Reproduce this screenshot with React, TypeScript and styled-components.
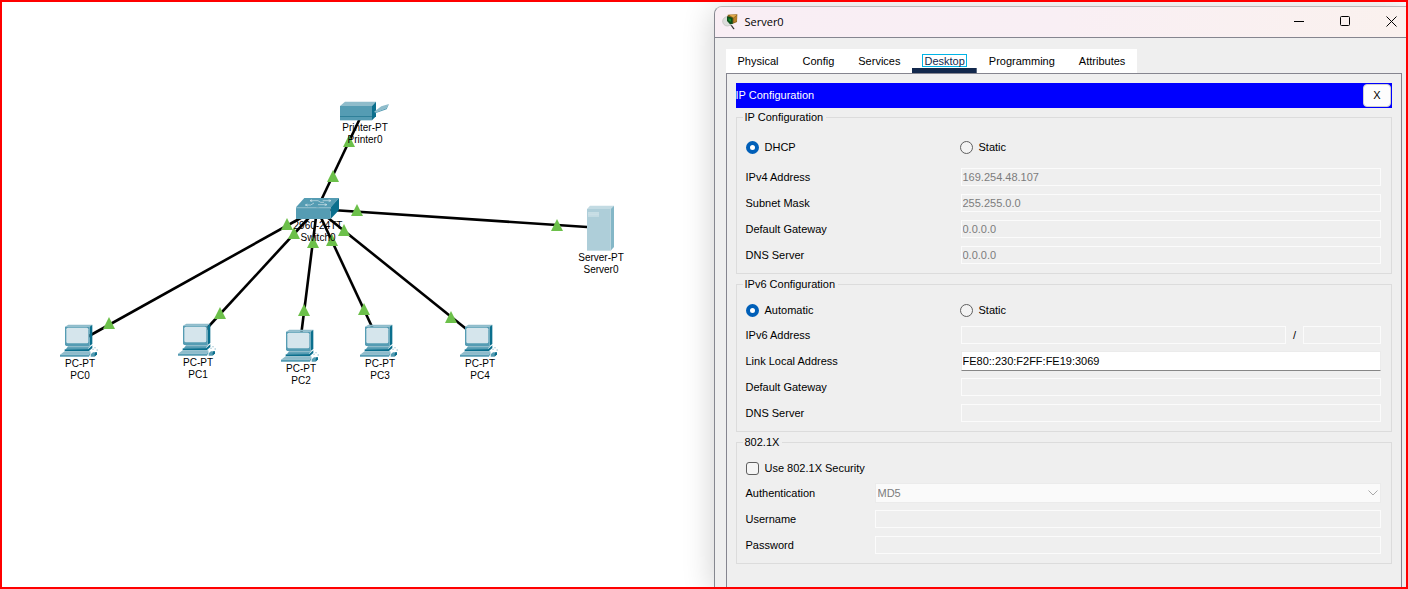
import React, { useState } from "react";
import styled, { createGlobalStyle } from "styled-components";

const GlobalStyle = createGlobalStyle`
  *, *::before, *::after { box-sizing: border-box; }
  body {
    margin: 0;
    background: #fff;
    color: #000;
    font: 11px/13px "Liberation Sans", Arial, sans-serif;
  }
  button, input, select { font: inherit; color: inherit; margin: 0; }
`;

const Frame = styled.main`
  display: flex;
  min-height: 100vh;
  border: 2px solid #f00;
  overflow: hidden;
`;

/* ---------- topology canvas ---------- */

const Canvas = styled.section`
  position: relative;
  flex: 712 1 0;
  min-width: 0;
`;

const Links = styled.svg`
  position: absolute;
  inset: 0;
  width: 100%;
  height: 100%;
  overflow: visible;
`;

const Node = styled.div<{ $x: number; $y: number }>`
  position: absolute;
  left: ${(p) => p.$x}px;
  top: ${(p) => p.$y}px;
  width: 80px;
  margin-left: -40px;
  display: flex;
  flex-direction: column;
  align-items: center;
  gap: 1px;
`;

const NodeLabel = styled.div`
  font-size: 10px;
  line-height: 12px;
  text-align: center;
  white-space: nowrap;
`;

const FRONT = "#559cb3";
const TOP = "#8fbccb";
const SIDE = "#0b6f8d";

const PcIcon = () => (
  <svg width="40" height="33" viewBox="0 0 120 99" aria-hidden="true">
    <path d="M15 8L25 2H97L89 8Z" fill={TOP} />
    <path d="M89 8L97 2V60L89 66Z" fill={SIDE} />
    <path d="M15 8H89V66H18L15 62Z" fill={FRONT} />
    <rect x="19" y="11" width="66" height="47" rx="5" fill="#d5e5ec" />
    <path d="M24 66H92L86 72H20Z" fill={TOP} />
    <path d="M13 78L24 70H86L84 78Z" fill={FRONT} />
    <path d="M84 76L97 64V72L86 82H14V77Z" fill={SIDE} />
    <path d="M0 92L14 82H91L87 92Z" fill={TOP} />
    <path d="M0 92H87L91 82V90L87 98H0Z" fill={FRONT} />
    <path d="M92 91L99 85H110V92L103 98H92Z" fill={FRONT} />
    <path d="M106 85H111V91L104 98V91Z" fill={SIDE} />
    <path d="M97 74h4v3h-4zM103 70h4v3h-4zM110 76h3v4h-3z" fill={TOP} />
  </svg>
);

const PrinterIcon = () => (
  <svg width="50" height="20" viewBox="0 0 150 60" aria-hidden="true">
    <path d="M0 15L15 2H108L96 15Z" fill={TOP} />
    <path d="M96 15L108 2V46L96 58Z" fill={SIDE} />
    <path d="M0 15H96V58H0Z" fill={FRONT} />
    <path d="M0 45H96V48H0Z" fill="#2f8099" />
    <path d="M102 32L124 16L147 9L138 22L108 34Z" fill={TOP} />
    <path d="M102 32L108 34L138 22L147 9L140 25L106 37Z" fill={FRONT} />
  </svg>
);

const SwitchIcon = () => (
  <svg width="44" height="21" viewBox="0 0 132 63" aria-hidden="true">
    <path d="M0 28L25 0H129L104 28Z" fill={FRONT} />
    <path d="M104 28L129 0V36L104 63Z" fill={SIDE} />
    <path d="M0 28H104V63H0Z" fill={FRONT} />
    <path d="M0 28H104L106 31H0Z" fill={TOP} />
    <g fill="none" stroke="#d5e6ec" strokeWidth="2">
      <path d="M42 8H66L74 13H84M48 5L42 8L49 11" />
      <path d="M28 21H44L54 15M34 18L28 21L35 24" />
      <path d="M80 8H104M98 5L105 8L98 11" />
      <path d="M66 20H92M86 17L93 20L86 23" />
    </g>
  </svg>
);

const ServerIcon = () => (
  <svg width="28" height="46" viewBox="0 0 84 138" aria-hidden="true">
    <path d="M0 12L9 2H81L71 12Z" fill="#c3dbe3" />
    <path d="M71 12L81 2V126L71 137Z" fill="#84b7c7" />
    <path d="M0 12H71V137H0Z" fill="#aeced9" />
    <path d="M3 21H36V35H3Z" fill="#cde1e8" />
    <path d="M3 24H36M3 31H36" stroke="#bcd6df" strokeWidth="2" />
  </svg>
);

type Kind = "pc" | "printer" | "switch" | "server";

const icons: Record<Kind, React.FC> = {
  pc: PcIcon,
  printer: PrinterIcon,
  switch: SwitchIcon,
  server: ServerIcon,
};

const devices: { kind: Kind; model: string; name: string; x: number; y: number }[] = [
  { kind: "printer", model: "Printer-PT", name: "Printer0", x: 363, y: 99 },
  { kind: "switch", model: "2960-24TT", name: "Switch0", x: 316, y: 196 },
  { kind: "server", model: "Server-PT", name: "Server0", x: 599, y: 203 },
  { kind: "pc", model: "PC-PT", name: "PC0", x: 78, y: 322 },
  { kind: "pc", model: "PC-PT", name: "PC1", x: 196, y: 321 },
  { kind: "pc", model: "PC-PT", name: "PC2", x: 299, y: 327 },
  { kind: "pc", model: "PC-PT", name: "PC3", x: 378, y: 322 },
  { kind: "pc", model: "PC-PT", name: "PC4", x: 478, y: 322 },
];

const hub = [315, 207];
const linkEnds = [
  [361, 110], [600, 226], [78, 339], [196, 336], [298, 342], [378, 342], [478, 338],
];
const linkLights = [
  [347, 139], [331, 174], [355, 208], [555, 223], [285, 222], [292, 231], [311, 240],
  [330, 238], [342, 228], [107, 321], [218, 311], [302, 308], [362, 307], [449, 315],
];

const Topology = () => (
  <Canvas aria-label="Network topology">
    <Links aria-hidden="true">
      {linkEnds.map(([x, y]) => (
        <line key={x} x1={hub[0]} y1={hub[1]} x2={x} y2={y} stroke="#000" strokeWidth="2.6" />
      ))}
      {linkLights.map(([x, y]) => (
        <path key={`${x}-${y}`} d={`M${x} ${y - 6}L${x + 6} ${y + 6}H${x - 6}Z`} fill="#6cc04a" />
      ))}
    </Links>
    {devices.map((d) => {
      const Icon = icons[d.kind];
      return (
        <Node key={d.name} $x={d.x} $y={d.y}>
          <Icon />
          <NodeLabel>
            {d.model}
            <br />
            {d.name}
          </NodeLabel>
        </Node>
      );
    })}
  </Canvas>
);

/* ---------- device window ---------- */

const Window = styled.section`
  position: relative;
  flex: 692 1 0;
  min-width: 0;
  margin-top: 4px;
  display: flex;
  flex-direction: column;
  border-top: 1px solid #b9b9b9;
  border-left: 1px solid #85878f;
  border-top-left-radius: 8px;
  background: #efefef;
  box-shadow: 0 4px 32px rgba(0, 0, 0, 0.2);
`;

const TitleBar = styled.header`
  display: flex;
  align-items: center;
  height: 31px;
  padding: 0 0 1px 7px;
  gap: 6px;
  border-bottom: 1px solid #85858f;
  border-top-left-radius: 7px;
  background: linear-gradient(90deg, #f9eef4, #f9eff4 50%, #faf1ee);
`;

const Title = styled.h1`
  flex: 1;
  margin: 0;
  font: 400 11px/16px "Open Sans", sans-serif;
`;

const WindowControls = styled.div`
  display: flex;
  gap: 16px;
`;

const WindowButton = styled.button`
  display: grid;
  place-items: center;
  width: 30px;
  height: 28px;
  padding: 0;
  border: 0;
  background: none;
`;

const WindowBody = styled.div`
  flex: 1;
  display: flex;
  flex-direction: column;
  align-items: stretch;
  padding: 11px 4px 0 11px;
`;

const TabBar = styled.nav`
  display: flex;
  align-self: flex-start;
  background: #fff;
`;

const Tab = styled.button<{ $active?: boolean }>`
  height: 24px;
  padding: 0 10px 1px;
  border: 0;
  background: ${(p) => (p.$active ? "linear-gradient(#12284c, #12284c) bottom / 100% 5px no-repeat" : "none")};
  color: ${(p) => (p.$active ? "#12284c" : "#000")};

  span {
    display: block;
    height: 13px;
    padding: 0 1px;
    border: 1px solid ${(p) => (p.$active ? "#00b4e6" : "transparent")};
    line-height: 12px;
  }
`;

const Panel = styled.div`
  flex: 1;
  padding: 9px 9px 16px;
  border: 1px solid #85858f;
  border-bottom: 0;
`;

const PanelHeader = styled.div`
  display: flex;
  align-items: center;
  justify-content: space-between;
  height: 25px;
  margin-bottom: 3px;
  padding-right: 1px;
  background: #00f;
  color: #fff;
`;

const PanelTitle = styled.h2`
  margin: 0;
  font-size: 11px;
  font-weight: 400;
`;

const CloseButton = styled.button`
  width: 28px;
  height: 23px;
  padding: 0;
  border: 1px solid #d0d0d0;
  border-radius: 4px;
  background: #fdfdfd;
  color: #000;
`;

const Group = styled.fieldset`
  min-width: 0;
  margin: 0 0 4px;
  padding: 7px 10px 5px 9px;
  border: 1px solid #dcdcdc;
`;

const GroupTitle = styled.legend`
  margin-left: -3px;
  padding: 0 3px 0 2px;
`;

const ChoiceRow = styled.div<{ $tall?: boolean }>`
  display: grid;
  grid-template-columns: 214px 1fr;
  align-items: center;
  height: ${(p) => (p.$tall ? 33 : 24)}px;
`;

const Choice = styled.label`
  display: flex;
  align-items: center;
  gap: 6px;
`;

const Radio = styled.input.attrs({ type: "radio" })`
  appearance: none;
  width: 13px;
  height: 13px;
  border: 1px solid #5f5f5f;
  border-radius: 50%;
  background: #f3f3f3;

  &:checked {
    border: 4px solid #005fb8;
    background: #fff;
  }
`;

const Checkbox = styled.input.attrs({ type: "checkbox" })`
  appearance: none;
  width: 13px;
  height: 13px;
  border: 1px solid #5f5f5f;
  border-radius: 3px;
  background: #f5f5f5;

  &:checked {
    background: #005fb8;
  }
`;

const FieldRow = styled.div<{ $label: number }>`
  display: grid;
  grid-template-columns: ${(p) => p.$label}px minmax(0, 1fr);
  align-items: center;
  height: 26px;
`;

const PrefixGroup = styled.div`
  display: grid;
  grid-template-columns: minmax(0, 1fr) 17px 78px;
  align-items: center;
  text-align: center;
`;

const TextBox = styled.input`
  width: 100%;
  height: 18px;
  padding: 0 1px;
  border: 1px solid #fbfbfb;
  border-radius: 0;
  background: #fff;

  &:enabled {
    height: 20px;
    border-color: #ebebeb;
    border-bottom-color: #868686;
  }

  &:disabled {
    background: #efefef;
    color: #7c7c7c;
  }
`;

const SelectWrap = styled.div`
  position: relative;

  svg {
    position: absolute;
    right: 3px;
    top: 7px;
    pointer-events: none;
  }
`;

const Select = styled.select`
  display: block;
  appearance: none;
  width: 100%;
  height: 20px;
  padding: 0 2px;
  border: 1px solid #ebebeb;
  border-radius: 0;
  background: #fafafa;

  &:disabled {
    color: #7c7c7c;
    opacity: 1;
  }
`;

const tabs = ["Physical", "Config", "Services", "Desktop", "Programming", "Attributes"];

const Field = ({ id, label, value }: { id: string; label: string; value?: string }) => (
  <FieldRow $label={id.startsWith("dot1x") ? 129 : 215}>
    <label htmlFor={id}>{label}</label>
    <TextBox id={id} defaultValue={value} disabled={id !== "v6-link"} />
  </FieldRow>
);

const AppIcon = () => (
  <svg width="17" height="17" viewBox="0 0 51 51" aria-hidden="true">
    <circle cx="16" cy="25" r="14" fill="#dcdcda" stroke="#b9bbb8" strokeWidth="2" />
    <path d="M17 5L46 4L45 27L31 33L17 20Z" fill="#8a6420" />
    <path d="M21 5L45 5L34 14Z" fill="#e2a94a" />
    <path d="M35 15L45 8L44 25L35 29Z" fill="#b98128" />
    <path d="M15 10L32 14L32 33L24 34L15 24Z" fill="#0d4d18" />
    <path d="M19 16L27 18L27 26L20 23Z" fill="#178a2c" />
    <path d="M25 36L30 37L38 48L34 49Z" fill="#333" />
  </svg>
);

export default function App() {
  const [active, setActive] = useState("Desktop");

  return (
    <Frame>
      <GlobalStyle />
      <Topology />
      <Window aria-label="Server0">
        <TitleBar>
          <AppIcon />
          <Title>Server0</Title>
          <WindowControls>
            <WindowButton aria-label="Minimize">
              <svg width="11" height="11" stroke="#000" fill="none">
                <path d="M0 5.5H10" />
              </svg>
            </WindowButton>
            <WindowButton aria-label="Maximize">
              <svg width="11" height="11" stroke="#000" fill="none">
                <rect x="0.5" y="0.5" width="9" height="9" rx="1" />
              </svg>
            </WindowButton>
            <WindowButton aria-label="Close">
              <svg width="11" height="11" stroke="#000" fill="none">
                <path d="M0.5 0.5L10.5 10.5M10.5 0.5L0.5 10.5" />
              </svg>
            </WindowButton>
          </WindowControls>
        </TitleBar>
        <WindowBody>
          <TabBar>
            {tabs.map((t) => (
              <Tab key={t} $active={t === active} onClick={() => setActive(t)}>
                <span>{t}</span>
              </Tab>
            ))}
          </TabBar>
          <Panel>
            <PanelHeader>
              <PanelTitle>IP Configuration</PanelTitle>
              <CloseButton>X</CloseButton>
            </PanelHeader>

            <Group>
              <GroupTitle>IP Configuration</GroupTitle>
              <ChoiceRow $tall>
                <Choice>
                  <Radio name="v4" defaultChecked />
                  DHCP
                </Choice>
                <Choice>
                  <Radio name="v4" />
                  Static
                </Choice>
              </ChoiceRow>
              <Field id="v4-address" label="IPv4 Address" value="169.254.48.107" />
              <Field id="v4-mask" label="Subnet Mask" value="255.255.0.0" />
              <Field id="v4-gateway" label="Default Gateway" value="0.0.0.0" />
              <Field id="v4-dns" label="DNS Server" value="0.0.0.0" />
            </Group>

            <Group>
              <GroupTitle>IPv6 Configuration</GroupTitle>
              <ChoiceRow>
                <Choice>
                  <Radio name="v6" defaultChecked />
                  Automatic
                </Choice>
                <Choice>
                  <Radio name="v6" />
                  Static
                </Choice>
              </ChoiceRow>
              <FieldRow $label={215}>
                <label htmlFor="v6-address">IPv6 Address</label>
                <PrefixGroup>
                  <TextBox id="v6-address" disabled />
                  <span>/</span>
                  <TextBox aria-label="Prefix length" disabled />
                </PrefixGroup>
              </FieldRow>
              <Field id="v6-link" label="Link Local Address" value="FE80::230:F2FF:FE19:3069" />
              <Field id="v6-gateway" label="Default Gateway" />
              <Field id="v6-dns" label="DNS Server" />
            </Group>

            <Group>
              <GroupTitle>802.1X</GroupTitle>
              <ChoiceRow>
                <Choice>
                  <Checkbox />
                  Use 802.1X Security
                </Choice>
              </ChoiceRow>
              <FieldRow $label={129}>
                <label htmlFor="dot1x-auth">Authentication</label>
                <SelectWrap>
                  <Select id="dot1x-auth" disabled>
                    <option>MD5</option>
                  </Select>
                  <svg width="10" height="6" fill="none" stroke="#a8a8a8" aria-hidden="true">
                    <path d="M0.5 0.5L5 5L9.5 0.5" />
                  </svg>
                </SelectWrap>
              </FieldRow>
              <Field id="dot1x-user" label="Username" />
              <Field id="dot1x-pass" label="Password" />
            </Group>
          </Panel>
        </WindowBody>
      </Window>
    </Frame>
  );
}
